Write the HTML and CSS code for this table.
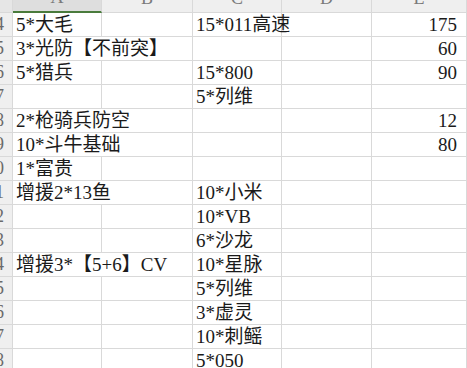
FILE: index.html
```html
<!DOCTYPE html>
<html lang="zh">
<head>
<meta charset="utf-8">
<title>Sheet</title>
<link rel="stylesheet" href="styles.css">
</head>
<body>
<div class="sheet">
  <div class="corner"></div>
  <div class="colhead sel"><span>A</span></div>
  <div class="colhead"><span>B</span></div>
  <div class="colhead"><span>C</span></div>
  <div class="colhead"><span>D</span></div>
  <div class="colhead"><span>E</span></div>

  <div class="rowhead"><span>4</span></div>
  <div class="cell">5*大毛</div><div class="cell"></div>
  <div class="cell">15*011高速</div><div class="cell"></div>
  <div class="cell num">175</div>

  <div class="rowhead"><span>5</span></div>
  <div class="cell wide">3*光防【不前突】</div>
  <div class="cell"></div><div class="cell"></div>
  <div class="cell num">60</div>

  <div class="rowhead"><span>6</span></div>
  <div class="cell">5*猎兵</div><div class="cell"></div>
  <div class="cell">15*800</div><div class="cell"></div>
  <div class="cell num">90</div>

  <div class="rowhead"><span>7</span></div>
  <div class="cell"></div><div class="cell"></div>
  <div class="cell">5*列维</div><div class="cell"></div>
  <div class="cell num"></div>

  <div class="rowhead"><span>8</span></div>
  <div class="cell wide">2*枪骑兵防空</div>
  <div class="cell"></div><div class="cell"></div>
  <div class="cell num">12</div>

  <div class="rowhead"><span>9</span></div>
  <div class="cell wide">10*斗牛基础</div>
  <div class="cell"></div><div class="cell"></div>
  <div class="cell num">80</div>

  <div class="rowhead"><span>10</span></div>
  <div class="cell">1*富贵</div><div class="cell"></div>
  <div class="cell"></div><div class="cell"></div>
  <div class="cell num"></div>

  <div class="rowhead"><span>11</span></div>
  <div class="cell wide">增援2*13鱼</div>
  <div class="cell">10*小米</div><div class="cell"></div>
  <div class="cell num"></div>

  <div class="rowhead"><span>12</span></div>
  <div class="cell"></div><div class="cell"></div>
  <div class="cell">10*VB</div><div class="cell"></div>
  <div class="cell num"></div>

  <div class="rowhead"><span>13</span></div>
  <div class="cell"></div><div class="cell"></div>
  <div class="cell">6*沙龙</div><div class="cell"></div>
  <div class="cell num"></div>

  <div class="rowhead"><span>14</span></div>
  <div class="cell wide">增援3*【5+6】CV</div>
  <div class="cell">10*星脉</div><div class="cell"></div>
  <div class="cell num"></div>

  <div class="rowhead"><span>15</span></div>
  <div class="cell"></div><div class="cell"></div>
  <div class="cell">5*列维</div><div class="cell"></div>
  <div class="cell num"></div>

  <div class="rowhead"><span>16</span></div>
  <div class="cell"></div><div class="cell"></div>
  <div class="cell">3*虚灵</div><div class="cell"></div>
  <div class="cell num"></div>

  <div class="rowhead"><span>17</span></div>
  <div class="cell"></div><div class="cell"></div>
  <div class="cell">10*刺鳐</div><div class="cell"></div>
  <div class="cell num"></div>

  <div class="rowhead"><span>18</span></div>
  <div class="cell"></div><div class="cell"></div>
  <div class="cell">5*050</div><div class="cell"></div>
  <div class="cell num"></div>
</div>
</body>
</html>
```

FILE: styles.css
```css
html, body {
  margin: 0;
  padding: 0;
  background: #ffffff;
  overflow: hidden;
}

.sheet {
  display: grid;
  grid-template-columns: 13px 89px 91px 89px 90px 95px;
  grid-template-rows: 13px;
  grid-auto-rows: 24px;
  font-family: "Liberation Serif", "Noto Sans CJK SC", serif;
  font-size: 19px;
  color: #1a1a1a;
  width: 467px;
}

.sheet > div {
  box-sizing: border-box;
  border-right: 1px solid #d9d9d9;
  border-bottom: 1px solid #d9d9d9;
}

.corner {
  background: #e6e6e6;
}

.colhead {
  background: #efefef;
  display: flex;
  justify-content: center;
  align-items: flex-end;
  overflow: hidden;
  color: #7a7a7a;
  font-size: 18px;
}

.colhead span {
  line-height: 20px;
  margin-bottom: 4px;
}

.colhead.sel {
  background: #dedede;
  border-bottom: 2px solid #4a7b3c;
}

.rowhead {
  background: #efefef;
  display: flex;
  justify-content: flex-end;
  align-items: center;
  overflow: hidden;
  color: #6a6a6a;
  font-size: 18px;
}

.rowhead span {
  padding-right: 8px;
  white-space: nowrap;
  line-height: 23px;
}

.cell {
  display: flex;
  align-items: flex-end;
  padding: 0 3px 0 3px;
  white-space: nowrap;
  line-height: 23px;
}

.cell.wide {
  grid-column: span 2;
}

.cell.num {
  justify-content: flex-end;
  padding-right: 9px;
}
```
